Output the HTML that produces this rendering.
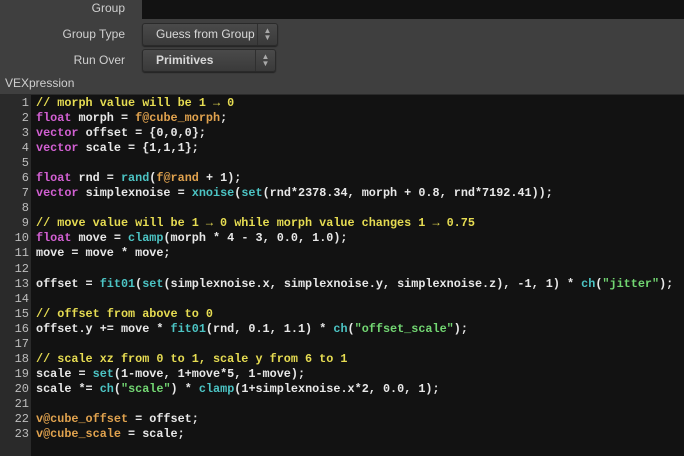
<!DOCTYPE html>
<html><head><meta charset="utf-8"><style>
body{margin:0;width:684px;height:455px;background:#3f3f3f;overflow:hidden;font-family:"Liberation Sans","DejaVu Sans",sans-serif;position:relative}
.lbl{position:absolute;color:#d0d0d0;font-size:12px;text-align:right;width:125px;left:0}
.fld{position:absolute;left:142px;top:0;width:542px;height:19px;background:#121212}
.menu{position:absolute;left:142px;height:21px;background:linear-gradient(#4a4a4a,#3a3a3a);border:1px solid #2a2a2a;border-radius:3px;color:#d8d8d8;font-size:12px;line-height:20px;box-shadow:0 1px 1px #222}
.menu .arr{position:absolute;right:0;top:0;width:20px;height:21px;border-left:1px solid #2f2f2f;color:#aaa;font-size:8px;line-height:7px;text-align:center;padding-top:3px;box-sizing:border-box}
.code{position:absolute;left:0;top:94px;width:684px;height:361px;background:#121212;border-top:1px solid #2a2a2a}
.gut{position:absolute;left:0;top:0;width:31px;height:361px;background:#2a2a2a}
pre{margin:0;position:absolute;top:1px;font-family:"Liberation Mono",monospace;font-weight:bold;font-size:11.8px;line-height:15.05px;color:#e8e8e8}
.num{left:0;width:29px;text-align:right;color:#bdbdbd;font-weight:normal;font-size:12px}
.src{left:36px}
.c{color:#e6dc52}.k{color:#d260d2}.f{color:#4cc4c4}.a{color:#e0a24e}.s{color:#72d672}
</style></head><body>
<div class="fld"></div>
<div class="lbl" style="top:1px">Group</div>
<div class="lbl" style="top:27px">Group Type</div>
<div class="lbl" style="top:53px">Run Over</div>
<div class="menu" style="top:23px;width:134px"><span style="position:absolute;left:13px">Guess from Group</span><div class="arr">▲<br>▼</div></div>
<div class="menu" style="top:49px;width:132px"><b style="position:absolute;left:13px">Primitives</b><div class="arr">▲<br>▼</div></div>
<div style="position:absolute;left:5px;top:76px;color:#cfcfcf;font-size:12px">VEXpression</div>
<div class="code"><div class="gut"></div>
<pre class="num">1
2
3
4
5
6
7
8
9
10
11
12
13
14
15
16
17
18
19
20
21
22
23</pre>
<pre class="src"><span class="c">// morph value will be 1 → 0</span>
<span class="k">float</span> morph = <span class="a">f@cube_morph</span>;
<span class="k">vector</span> offset = {0,0,0};
<span class="k">vector</span> scale = {1,1,1};

<span class="k">float</span> rnd = <span class="f">rand</span>(<span class="a">f@rand</span> + 1);
<span class="k">vector</span> simplexnoise = <span class="f">xnoise</span>(<span class="f">set</span>(rnd*2378.34, morph + 0.8, rnd*7192.41));

<span class="c">// move value will be 1 → 0 while morph value changes 1 → 0.75</span>
<span class="k">float</span> move = <span class="f">clamp</span>(morph * 4 - 3, 0.0, 1.0);
move = move * move;

offset = <span class="f">fit01</span>(<span class="f">set</span>(simplexnoise.x, simplexnoise.y, simplexnoise.z), -1, 1) * <span class="f">ch</span>(<span class="s">"jitter"</span>);

<span class="c">// offset from above to 0</span>
offset.y += move * <span class="f">fit01</span>(rnd, 0.1, 1.1) * <span class="f">ch</span>(<span class="s">"offset_scale"</span>);

<span class="c">// scale xz from 0 to 1, scale y from 6 to 1</span>
scale = <span class="f">set</span>(1-move, 1+move*5, 1-move);
scale *= <span class="f">ch</span>(<span class="s">"scale"</span>) * <span class="f">clamp</span>(1+simplexnoise.x*2, 0.0, 1);

<span class="a">v@cube_offset</span> = offset;
<span class="a">v@cube_scale</span> = scale;</pre>
</div>
</body></html>
